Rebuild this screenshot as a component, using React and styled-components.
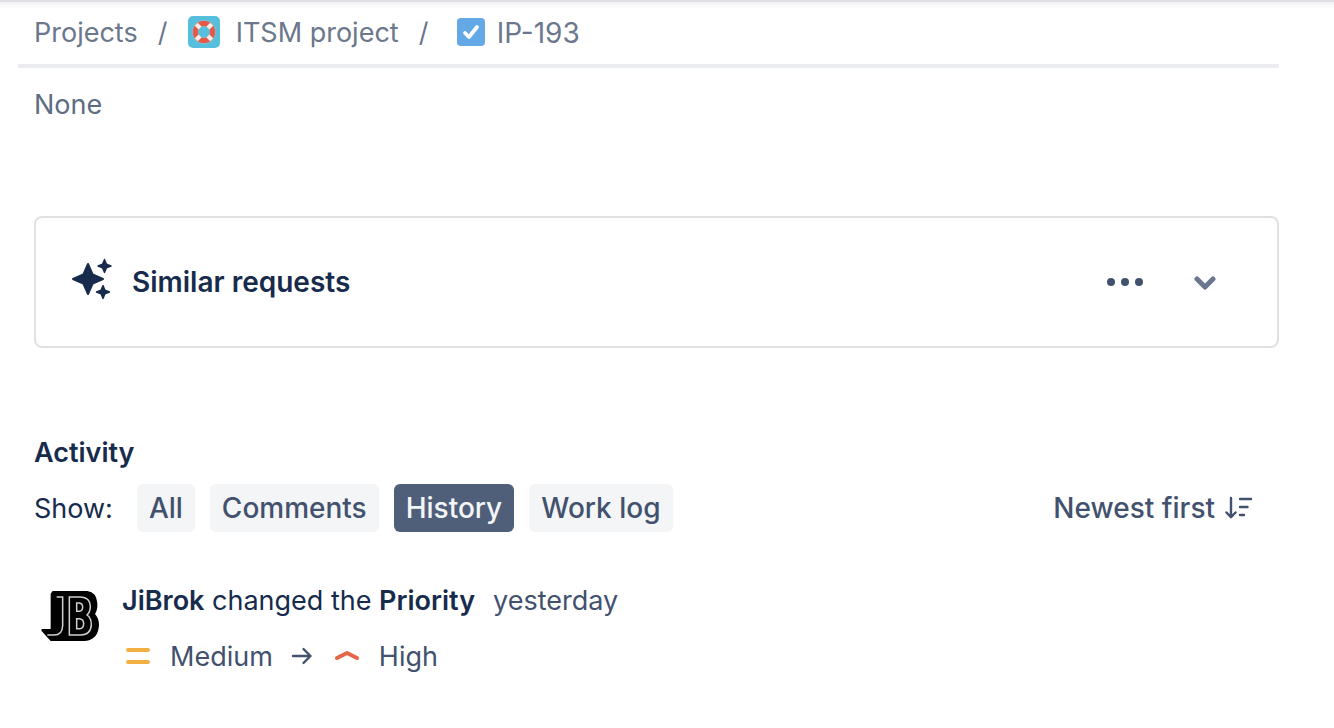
import React from "react";
import styled, { createGlobalStyle } from "styled-components";

const GlobalStyle = createGlobalStyle`
  *, *::before, *::after { box-sizing: border-box; }
  body {
    margin: 0;
    background: #fff;
    color: #172b4d;
    font-family: Inter, "Liberation Sans", sans-serif;
    font-size: 27px;
    line-height: 34px;
  }
  h2, h3, p, ol, ul { margin: 0; padding: 0; font-size: inherit; font-weight: inherit; }
  button { font: inherit; border: 0; background: none; padding: 0; cursor: pointer; }
  svg { display: block; flex: none; }
`;

const Page = styled.div`
  padding: 0 55px 40px 18px;
  background: linear-gradient(#dfe0e3 0, #dfe0e3 2px, #f1f1f4 2px, #fff 8px) no-repeat;
`;

const Breadcrumbs = styled.nav`
  border-bottom: 4px solid #ebecf0;
  padding: 16px 16px 14px;
  ol { display: flex; align-items: center; list-style: none; }
  li { display: flex; align-items: flex-start; }
  li + li::before { content: "/"; width: 50px; text-align: center; color: #6b778c; }
`;

const Crumb = styled.a`
  display: flex;
  align-items: flex-start;
  gap: 16px;
  color: #6b778c;
  text-decoration: none;
`;

const IssueCrumb = styled(Crumb)`
  gap: 12px;
  padding-left: 8px;
  font-size: 28px;
  svg { margin-top: 2px; }
`;

const Content = styled.main`
  padding-left: 16px;
`;

const FieldValue = styled.p`
  padding: 20px 0 94px;
  color: #5e6c84;
`;

const Card = styled.section`
  display: flex;
  align-items: center;
  height: 132px;
  border: 2px solid #dfe1e3;
  border-radius: 8px;
  padding: 0 48px 0 34px;
`;

const CardTitle = styled.h2`
  flex: 1;
  && { padding-left: 20px; font-size: 28px; font-weight: 600; }
`;

const IconButton = styled.button`
  display: grid;
  place-items: center;
  width: 48px;
  height: 48px;
  margin-left: 32px;
  color: ${(p) => p.$color};
`;

const Activity = styled.section`
  padding-top: 88px;
`;

const Heading = styled.h3`
  && { font-weight: 600; }
`;

const Toolbar = styled.div`
  display: flex;
  align-items: center;
  gap: 15px;
  padding-top: 14px;
`;

const ShowLabel = styled.span`
  margin-right: 9px;
  padding-top: 2px;
`;

const Tab = styled.button`
  height: 48px;
  && { padding: 0 12px; font-size: 28px; font-weight: 500; }
  border-radius: 6px;
  color: ${(p) => (p.$active ? "#f4f5f7" : "#42526e")};
  && { background: ${(p) => (p.$active ? "#505f79" : "#f4f5f7")}; }
`;

const SortButton = styled.button`
  display: flex;
  align-items: center;
  gap: 10px;
  margin-left: auto;
  margin-right: 26px;
  color: #42526e;
  && { font-size: 28px; font-weight: 500; }
`;

const Entry = styled.article`
  display: flex;
  gap: 22px;
  padding: 52px 0 0 6px;
`;

const Avatar = styled.div`
  padding-top: 6px;
`;

const EntryBody = styled.div`
  display: grid;
  gap: 22px;
`;

const Strong = styled.strong`
  font-weight: 600;
`;

const Time = styled.time`
  margin-left: 18px;
  color: #42526e;
`;

const Change = styled.p`
  display: flex;
  align-items: flex-start;
  color: #42526e;
`;

const Priority = styled.span`
  display: flex;
  align-items: flex-start;
  gap: 16px;
`;

const LifebuoyIcon = () => (
  <svg width="32" height="32" viewBox="0 0 32 32" aria-hidden="true">
    <rect width="32" height="32" rx="5" fill="#56c0dc" />
    <circle cx="16" cy="16" r="11.500" fill="#a5dcea" />
    <circle cx="16" cy="16" r="8.500" fill="none" stroke="#e5594a" strokeWidth="5.600" />
    <path d="M8.300 8.300l4 4M23.700 8.300l-4 4M8.300 23.700l4-4M23.700 23.700l-4-4" stroke="#fbeeea" strokeWidth="4.200" />
    <circle cx="16" cy="16" r="5.700" fill="#56c0dc" />
  </svg>
);

const TaskIcon = () => (
  <svg width="28" height="28" viewBox="0 0 28 28" aria-hidden="true">
    <rect width="28" height="28" rx="4" fill="#63a9e6" />
    <path d="M8 15l4 4L20 9" fill="none" stroke="#fff" strokeWidth="3.800" strokeLinecap="round" strokeLinejoin="round" />
  </svg>
);

const SparkleIcon = () => (
  <svg width="42" height="48" viewBox="0 0 42 48" aria-hidden="true" fill="#172b4d" stroke="#172b4d" strokeLinejoin="round">
    <path strokeWidth="2" d="M18 6l4.600 10.400L33 21l-10.400 4.600L18 36l-4.600-10.400L3 21l10.400-4.600z" />
    <path strokeWidth="1.400" d="M34.500 1.500l1.900 4.600 4.600 1.900-4.600 1.900-1.900 4.600-1.900-4.600L28 8l4.600-1.900zM33 27.500l1.900 4.600 4.600 1.900-4.600 1.900-1.900 4.600-1.900-4.600-4.600-1.900 4.600-1.900z" />
  </svg>
);

const MoreIcon = () => (
  <svg width="36" height="8" viewBox="0 0 36 8" aria-hidden="true" fill="currentColor">
    <circle cx="4" cy="4" r="4" />
    <circle cx="18" cy="4" r="4" />
    <circle cx="32" cy="4" r="4" />
  </svg>
);

const ChevronIcon = () => (
  <svg width="22" height="16" viewBox="0 0 22 16" aria-hidden="true">
    <path d="M3 5l8 8 8-8" fill="none" stroke="currentColor" strokeWidth="5" strokeLinecap="round" strokeLinejoin="round" />
  </svg>
);

const SortIcon = () => (
  <svg width="28" height="24" viewBox="0 0 28 24" aria-hidden="true" fill="none" stroke="currentColor" strokeWidth="2.400" strokeLinecap="round" strokeLinejoin="round">
    <path d="M6 2v19M1.500 16.500L6 21.300l4.500-4.800M15 3h11M15 11h7.500M15 19h4" />
  </svg>
);

const BrandLogo = () => (
  <svg width="60" height="52" viewBox="30 45 180 156" role="img" aria-label="JiBrok">
    <path d="M62 56L68 48H172Q200 52 202 85Q203 106 195 117Q207 130 207 150Q205 194 165 198H62L34 167L35 162H62Z" fill="#000" />
    <g fill="none" stroke="#d0d0d0" strokeWidth="4.500">
      <path d="M80 66H98V152Q97 180 72 180H52" />
      <path d="M118 66H152Q180 67 181 94Q181 111 171 120Q184 129 184 149Q182 180 152 180H118Z" />
      <path d="M140 84H148Q158 86 158 96Q158 108 148 109H140ZM140 131H149Q161 133 161 146Q161 160 149 161H140Z" />
    </g>
  </svg>
);

const MediumIcon = () => (
  <svg width="32" height="32" viewBox="0 0 32 32" aria-hidden="true">
    <path d="M6 10h20M6 22h20" stroke="#efb041" strokeWidth="4" strokeLinecap="round" />
  </svg>
);

const HighIcon = () => (
  <svg width="32" height="32" viewBox="0 0 32 32" aria-hidden="true">
    <path d="M6 18L16 13l10 5" fill="none" stroke="#e5674a" strokeWidth="4" strokeLinecap="round" strokeLinejoin="round" />
  </svg>
);

const ArrowSvg = styled.svg`
  margin: 0 18px;
`;

const ArrowIcon = () => (
  <ArrowSvg width="22" height="32" viewBox="0 0 22 32" role="img" aria-label="changed to">
    <path d="M2 16h17M12.500 9l7 7-7 7" fill="none" stroke="currentColor" strokeWidth="2.400" strokeLinecap="round" strokeLinejoin="round" />
  </ArrowSvg>
);

const tabs = ["All", "Comments", "History", "Work log"];

export default function App() {
  const [active, setActive] = React.useState("History");
  return (
    <>
      <GlobalStyle />
      <Page>
        <Breadcrumbs aria-label="Breadcrumbs">
          <ol>
            <li><Crumb href="#projects">Projects</Crumb></li>
            <li><Crumb href="#itsm"><LifebuoyIcon />ITSM project</Crumb></li>
            <li><IssueCrumb href="#ip-193"><TaskIcon />IP-193</IssueCrumb></li>
          </ol>
        </Breadcrumbs>
        <Content>
          <FieldValue>None</FieldValue>
          <Card>
            <SparkleIcon />
            <CardTitle>Similar requests</CardTitle>
            <IconButton aria-label="More actions" $color="#42526e"><MoreIcon /></IconButton>
            <IconButton aria-label="Expand" $color="#6b778c"><ChevronIcon /></IconButton>
          </Card>
          <Activity>
            <Heading>Activity</Heading>
            <Toolbar>
              <ShowLabel>Show:</ShowLabel>
              {tabs.map((t) => (
                <Tab key={t} $active={t === active} aria-pressed={t === active} onClick={() => setActive(t)}>{t}</Tab>
              ))}
              <SortButton>Newest first<SortIcon /></SortButton>
            </Toolbar>
            <Entry>
              <Avatar><BrandLogo /></Avatar>
              <EntryBody>
                <p>
                  <Strong>JiBrok</Strong> changed the <Strong>Priority</Strong>
                  <Time>yesterday</Time>
                </p>
                <Change>
                  <Priority><MediumIcon />Medium</Priority>
                  <ArrowIcon />
                  <Priority><HighIcon />High</Priority>
                </Change>
              </EntryBody>
            </Entry>
          </Activity>
        </Content>
      </Page>
    </>
  );
}
